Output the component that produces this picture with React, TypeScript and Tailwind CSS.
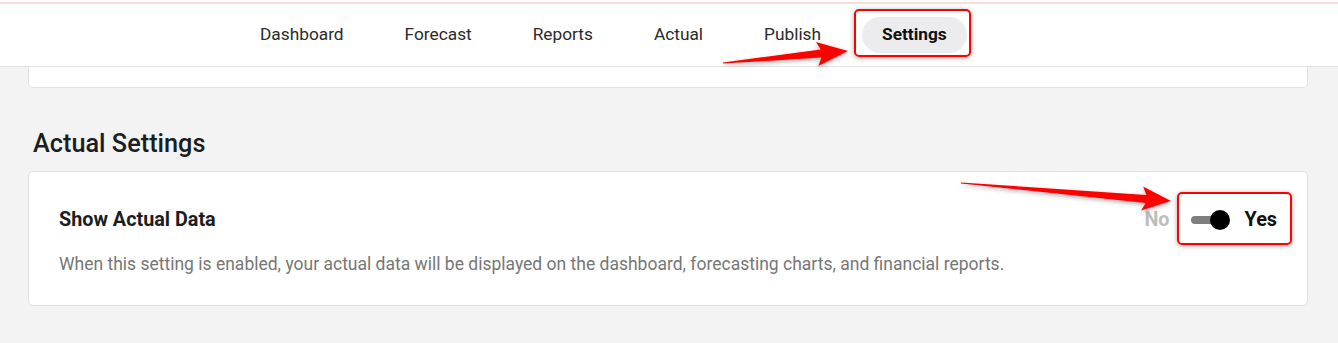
import React from 'react';

type Pt = [number, number];

// tapered annotation arrow: thin tail, widening shaft, triangular head
const arrowPoints = (tail: Pt, tip: Pt, headLen: number, headHalf: number, shaftHalf: number) => {
  const dx = tip[0] - tail[0];
  const dy = tip[1] - tail[1];
  const len = Math.hypot(dx, dy);
  const ux = dx / len;
  const uy = dy / len;
  const nx = -uy;
  const ny = ux;
  const bx = tip[0] - ux * headLen;
  const by = tip[1] - uy * headLen;
  const pts: Pt[] = [
    [tail[0] + nx * 0.6, tail[1] + ny * 0.6],
    [bx + nx * shaftHalf, by + ny * shaftHalf],
    [bx - ux * 4 + nx * headHalf, by - uy * 4 + ny * headHalf],
    tip,
    [bx - ux * 4 - nx * headHalf, by - uy * 4 - ny * headHalf],
    [bx - nx * shaftHalf, by - ny * shaftHalf],
    [tail[0] - nx * 0.6, tail[1] - ny * 0.6],
  ];
  return pts.map((p) => `${p[0].toFixed(1)},${p[1].toFixed(1)}`).join(' ');
};

const navItems = ['Dashboard', 'Forecast', 'Reports', 'Actual', 'Publish', 'Settings'];

const App = () => {
  return (
    <div
      className="relative w-[1338px] h-[343px] overflow-hidden bg-[#f2f3f2]"
      style={{ fontFamily: 'Roboto, "Noto Sans", sans-serif' }}
    >
      {/* top nav */}
      <header className="bg-white border-b border-[#e2e2e2] pt-[2px]">
        <div className="h-[2px] bg-[#f9ddd6]"></div>
        <nav className="h-[62px] flex items-center gap-[21px] pl-[240px]">
          {navItems.map((item) => (
            <div
              key={item}
              className={
                item === 'Settings'
                  ? 'h-[36px] flex items-center px-[20px] rounded-full bg-[#ececee] text-[17.3px] font-bold text-[#111]'
                  : 'h-[36px] flex items-center px-[20px] text-[17.3px] text-[#2a2a2a]'
              }
            >
              {item}
            </div>
          ))}
        </nav>
      </header>

      <main className="pl-[28px] pr-[30px]">
        {/* tail of the previous card */}
        <div className="h-[21px] bg-white border-x border-b border-[#e0e0e0] rounded-b-[5px]"></div>

        <h2 className="mt-[40px] text-[25.3px] leading-[32px] font-medium text-[#1d1d1d] pl-[5px]">Actual Settings</h2>

        <section className="mt-[11px] bg-white border border-[#e0e0e0] rounded-[5px] pl-[30px] pr-[30px] pt-[34px] pb-[29px]">
          <div className="flex items-center justify-between h-[28px]">
            <h3 className="text-[19.8px] font-bold text-[#1d1d1d]">Show Actual Data</h3>
            <div className="flex items-center">
              <span className="text-[19.8px] font-bold text-[#bdbdbd]">No</span>
              <div className="relative ml-[21px] w-[39px] h-[20px] flex items-center">
                <div className="w-[34px] h-[8px] rounded-full bg-[#7f7f7f]"></div>
                <div className="absolute left-[19px] top-0 w-[20px] h-[20px] rounded-full bg-black"></div>
              </div>
              <span className="ml-[15px] text-[19.8px] font-bold text-[#111]">Yes</span>
            </div>
          </div>
          <p className="mt-[18px] text-[17.5px] leading-[24px] text-[#767676]">
            When this setting is enabled, your actual data will be displayed on the dashboard, forecasting charts, and financial reports.
          </p>
        </section>
      </main>

      {/* annotation boxes */}
      <div className="absolute left-[854px] top-[9px] w-[117px] h-[48px] border-2 border-[#f00] rounded-[5px] shadow-[0_1px_5px_rgba(0,0,0,0.35)]"></div>
      <div className="absolute left-[1177px] top-[192px] w-[115px] h-[53px] border-2 border-[#f00] rounded-[5px] shadow-[0_1px_5px_rgba(0,0,0,0.35)]"></div>

      {/* annotation arrows */}
      <svg className="absolute inset-0 pointer-events-none" width="1338" height="343">
        <defs>
          <filter id="arrow-shadow" x="-10%" y="-50%" width="120%" height="200%">
            <feDropShadow dx="0" dy="2" stdDeviation="2" floodColor="#000" floodOpacity="0.3" />
          </filter>
        </defs>
        <polygon points={arrowPoints([723, 63], [848, 51], 27, 12, 4)} fill="#f00" filter="url(#arrow-shadow)" />
        <polygon points={arrowPoints([961, 183], [1171, 201], 25, 12, 4)} fill="#f00" filter="url(#arrow-shadow)" />
      </svg>
    </div>
  );
};

export default App;
